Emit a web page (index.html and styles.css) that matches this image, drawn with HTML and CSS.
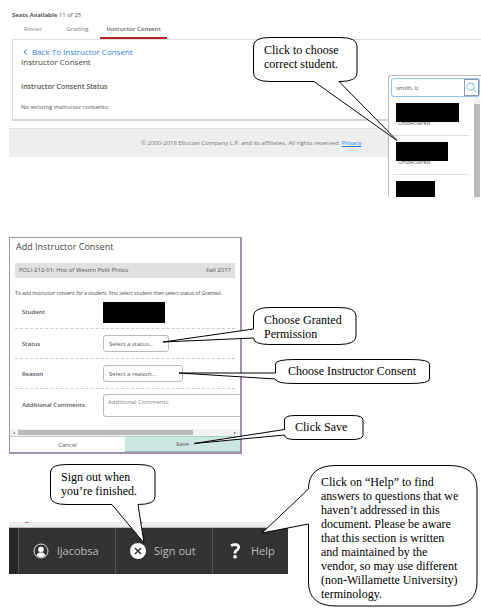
FILE: index.html
```html
<!DOCTYPE html>
<html lang="en">
    <head>
        <meta charset="UTF-8">
        <meta name="viewport" content="width=device-width, initial-scale=1">
        <title>Instructor Consent</title>
        <link rel="stylesheet" href="styles.css">
    </head>
    <body>
        <!-- step 1: find the student -->
        <section class="figure roster">
            <p class="seats"><b>Seats Available</b> 11 of 25</p>
            <nav class="tabs">
                <a href="#roster">Roster</a>
                <a href="#grading">Grading</a>
                <a href="#consent" class="active">Instructor Consent</a>
            </nav>
            <div class="card">
                <a href="#back" class="back"><svg class="chevron" viewBox="0 0 5 6"><path d="M4 0.5 L1 3 L4 5.5"/></svg>Back To Instructor Consent</a>
                <h1>Instructor Consent</h1>
                <h2>Instructor Consent Status</h2>
                <p>No existing instructor consents</p>
            </div>
            <footer class="copyright">© 2000-2018 Ellucian Company L.P. and its affiliates. All rights reserved. <a href="#privacy">Privacy</a></footer>

            <div class="picker">
                <form class="search">
                    <input type="text" value="smith, b" aria-label="Search students">
                    <button type="button" aria-label="Search">
                        <svg viewBox="0 0 12 12"><circle cx="5" cy="5" r="4"/><path d="M8 8 L11 11"/></svg>
                    </button>
                </form>
                <div class="results">
                    <ul>
                        <li><span class="redacted name-1"></span><span class="major">Undeclared</span></li>
                        <li><span class="redacted name-2"></span><span class="major">Undeclared</span></li>
                        <li><span class="redacted name-3"></span></li>
                    </ul>
                    <div class="scroll-y"></div>
                </div>
            </div>

            <div class="callout choose-student">
                <svg><path d="M17 .5 H87 Q104 .5 104 9 V36 Q104 44.500 87 44.500 H86 L144 103.500 L61 44.500 H17 Q.5 44.500 .5 36 V9 Q.5 .5 17 .5 Z"/></svg>
                <p>Click to choose<br>correct student.</p>
            </div>
        </section>

        <!-- step 2: fill in the consent -->
        <section class="figure consent">
            <form class="dialog">
                <h2>Add Instructor Consent</h2>
                <div class="course"><span>POLI-212-01: Hist of Westrn Polit Philos</span><span>Fall 2017</span></div>
                <p class="hint">To add instructor consent for a student, first select student then select status of Granted.</p>
                <div class="row picked">
                    <span class="label">Student</span>
                    <span class="redacted student"></span>
                </div>
                <div class="row">
                    <label for="status">Status</label>
                    <select id="status" class="status"><option>Select a status...</option></select>
                </div>
                <div class="row">
                    <label for="reason">Reason</label>
                    <select id="reason" class="reason"><option>Select a reason...</option></select>
                </div>
                <div class="row comments">
                    <label for="comments">Additional Comments</label>
                    <textarea id="comments" placeholder="Additional Comments"></textarea>
                </div>
                <div class="scroll-x"><span class="arrow-left"></span><span class="thumb"></span><span class="arrow-right"></span></div>
                <div class="actions">
                    <button type="button">Cancel</button>
                    <button type="button" class="save">Save</button>
                </div>
            </form>

            <div class="callout choose-status">
                <svg><path d="M17 .5 H86 Q103 .5 103 9 V29 Q103 37.500 86 37.500 H17 Q.5 37.500 .5 31 L-90 35 L.5 22 V9 Q.5 .5 17 .5 Z"/></svg>
                <p>Choose Granted<br>Permission</p>
            </div>
            <div class="callout choose-reason">
                <svg><path d="M20 .5 H135 Q154.500 .5 154.500 5 V20 Q154.500 24.500 135 24.500 H20 Q.5 24.500 .5 20 L-96 14 H.5 V5 Q.5 .5 20 .5 Z"/></svg>
                <p>Choose Instructor Consent</p>
            </div>
            <div class="callout click-save">
                <svg><path d="M11 .5 H68 Q79 .5 79 5 V20 Q79 24.500 68 24.500 H11 Q.5 24.500 .5 20 L-90 28.500 L.5 14.500 V5 Q.5 .5 11 .5 Z"/></svg>
                <p>Click Save</p>
            </div>
        </section>

        <!-- step 3: leave or get help -->
        <section class="figure account">
            <div class="strip">
                <svg viewBox="0 0 279 5"><path d="M15 0 Q18 1.500 21 0 Z M131 0 H134 L132 1.500 Z"/></svg>
            </div>
            <nav class="toolbar">
                <a href="#user">
                    <svg class="icon" viewBox="0 0 16 16"><circle cx="8" cy="8" r="7" fill="none" stroke="#ddd"/><circle cx="8" cy="6.500" r="2.800" fill="#fff"/><path d="M3.500 12.500 Q4 10 6.500 9.500 H9.500 Q12 10 12.500 12.500 Q8 16 3.500 12.500 Z" fill="#fff"/></svg>
                    <span>ljacobsa</span>
                </a>
                <a href="#signout">
                    <svg class="icon" viewBox="0 0 16 16"><circle cx="8" cy="8" r="8" fill="#fff"/><path d="M5 5 L11 11 M11 5 L5 11" stroke="#333" stroke-width="1.500"/></svg>
                    <span>Sign out</span>
                </a>
                <a href="#help" class="help">
                    <svg class="icon" viewBox="0 0 16 16"><path d="M4 2.500 Q6.500 1.300 9 1.700 Q12 2.500 11.500 5 Q11 6.800 9 7.800 Q8 8.500 8 10.500" fill="none" stroke="#fff" stroke-width="2.800"/><rect x="6.300" y="12" width="3.400" height="3.400" rx="1" fill="#fff"/></svg>
                    <span>Help</span>
                </a>
            </nav>

            <div class="callout sign-out">
                <svg><path d="M17 .5 H88 Q105 .5 105 8 V33 Q105 40.500 88 40.500 L94 79 L62 40.500 H17 Q.5 40.500 .5 33 V8 Q.5 .5 17 .5 Z"/></svg>
                <p>Sign out when<br>you’re finished.</p>
            </div>
            <div class="callout get-help">
                <svg><path d="M28 .5 H141 Q169 .5 169 24 V117 Q169 141 141 141 H28 Q.5 141 .5 117 V59 L-46 68 L.5 24 Q.5 .5 28 .5 Z"/></svg>
                <p>Click on “Help” to find<br>answers to questions that we<br>haven’t addressed in this<br>document. Please be aware<br>that this section is written<br>and maintained by the<br>vendor, so may use different<br>(non-Willamette University)<br>terminology.</p>
            </div>
        </section>
    </body>
</html>
```

FILE: styles.css
```css
* {
    box-sizing: border-box;
}
body {
    margin: 0;
    background: #fff;
    color: #555;
    font-family: "Open Sans", sans-serif;
    font-size: 6px;
    line-height: 8px;
}
h1, h2, p, ul {
    margin: 0;
    padding: 0;
}
input, button, select, textarea {
    margin: 0;
    font: inherit;
    color: inherit;
}
.figure {
    position: relative;
}
.redacted {
    display: block;
    background: #000;
}

/* roster page */
.roster {
    height: 197px;
    padding: 10px 0 0 9px;
    overflow: hidden;
}
.seats {
    padding-left: 3px;
    line-height: 10px;
}
.tabs {
    display: flex;
    margin-left: 3px;
    padding-right: 2px;
    border-bottom: 1px solid #ddd;
}
.tabs a {
    padding: 5px 12px 4px;
    color: #888;
    text-decoration: none;
}
.tabs .active {
    padding: 5px 6px 4px;
    border-bottom: 2px solid #b8201f;
    color: #666;
    font-weight: 600;
}
.card {
    margin: 0 2px 0 3px;
    padding: 7px 8px 8px;
    border-left: 1px solid #ddd;
    border-bottom: 2px solid #d4d4d4;
}
.back {
    display: flex;
    align-items: center;
    gap: 4px;
    padding-left: 2px;
    color: #2f80e0;
    font-size: 8px;
    line-height: 10px;
    text-decoration: none;
}
.chevron {
    width: 5px;
    height: 6px;
    fill: none;
    stroke: #2f80e0;
}
.card h1 {
    color: #444;
    font-size: 8px;
    font-weight: 400;
    line-height: 10px;
}
.card h2 {
    margin: 16px 0 12px;
    font-size: 7px;
    font-weight: 600;
}
.copyright {
    margin-top: 7px;
    padding: 10px 0 10px 132px;
    border-top: 1px solid #e0e0e0;
    background: #eee;
    color: #777;
}
.copyright a {
    color: #2f80e0;
}

/* student picker */
.picker {
    position: absolute;
    top: 75px;
    right: 0;
    width: 93px;
    padding: 2px 1px 0 2px;
    border: 1px solid #bbb;
    border-right: 0;
    border-radius: 3px 0 0 0;
    background: #fff;
}
.search {
    display: flex;
    height: 19px;
    border: 1px solid #8fc4f7;
    border-radius: 3px;
}
.search input {
    flex: 1;
    min-width: 0;
    padding: 0 4px;
    border: 0;
    background: none;
}
.search button {
    display: flex;
    align-items: center;
    justify-content: center;
    width: 15px;
    padding: 0;
    border: 1px solid #8a9bb5;
    background: #fff;
}
.search svg {
    width: 11px;
    height: 11px;
    fill: none;
    stroke: #6cb2f2;
}
.results {
    display: flex;
    justify-content: space-between;
    height: 102px;
}
.results ul {
    width: 78px;
    padding-left: 2px;
    list-style: none;
}
.results li {
    height: 39px;
    padding: 6px 0 0 3px;
    border-bottom: 1px solid #ddd;
}
.results .redacted {
    position: relative;
    height: 19px;
}
.name-1 {
    width: 63px;
}
.name-2 {
    width: 52px;
}
.name-3 {
    width: 39px;
}
.major {
    display: block;
    margin-top: -2px;
    padding-left: 2px;
    line-height: 6px;
}
.scroll-y {
    width: 6px;
    border-top: 7px solid #eee;
    background: #bbb;
}

/* add consent dialog */
.consent {
    margin-top: 40px;
    padding-left: 9px;
}
.dialog {
    width: 233px;
    border: 1px solid #a591ad;
    border-right-width: 2px;
    border-bottom-width: 2px;
    background: #fff;
    overflow: hidden;
}
.dialog h2 {
    padding: 3px 6px 10px;
    color: #444;
    font-size: 9px;
    font-weight: 400;
    line-height: 12px;
}
.course {
    display: flex;
    justify-content: space-between;
    margin: 0 5px;
    padding: 3px 4px 4px;
    background: #e0e0e0;
}
.hint {
    padding: 11px 0 2px 5px;
    color: #444;
    font-size: 5px;
    white-space: nowrap;
}
.row {
    display: grid;
    grid-template-columns: 88px 1fr;
    align-items: center;
    height: 30px;
    margin: 0 5px;
    border-bottom: 1px dashed #ccc;
}
.row label, .label {
    padding-left: 7px;
    font-weight: 600;
}
.picked {
    padding-bottom: 3px;
}
.student {
    width: 62px;
    height: 21px;
}
.row select, .row textarea {
    border: 1px solid #bbb;
    border-radius: 3px;
    background: #fff;
}
.row select {
    height: 17px;
    padding: 0 5px;
    appearance: none;
}
.status {
    width: 66px;
}
.reason {
    width: 80px;
}
.comments {
    height: 40px;
    padding-bottom: 8px;
    border: 0;
}
.row textarea {
    width: 150px;
    height: 23px;
    padding: 3px 4px;
    resize: none;
}
.row textarea::placeholder {
    color: #888;
}
.scroll-x {
    display: flex;
    align-items: center;
    gap: 3px;
    height: 7px;
    padding: 0 2px;
    background: #f1f1f1;
}
.scroll-x .thumb {
    width: 175px;
    height: 5px;
    background: #bbb;
}
.arrow-left, .arrow-right {
    border: 1px solid transparent;
    border-right: 2px solid #777;
}
.arrow-right {
    margin-left: auto;
    border-right-color: transparent;
    border-left: 2px solid #444;
}
.actions {
    display: grid;
    grid-template-columns: 1fr 1fr;
    height: 16px;
}
.actions button {
    padding: 0;
    border: 0;
    border-top: 1px solid #ccc;
    background: #fff;
}
.actions .save {
    border-top-color: #a9cfc9;
    border-bottom: 1px solid #8fc0bc;
    background: #cde5e0;
}

/* account toolbar */
.account {
    margin-top: 68px;
    padding: 0 0 39px 9px;
}
.strip {
    width: 279px;
    height: 6px;
    border-bottom: 1px solid #bbb;
    background: #eee;
}
.strip svg {
    display: block;
    height: 5px;
    fill: #b8201f;
}
.toolbar {
    display: flex;
    width: 279px;
    height: 46px;
    border-left: 9px solid #262626;
    background: #333;
}
.toolbar a {
    display: flex;
    align-items: center;
    gap: 8px;
    width: 97px;
    padding-left: 14px;
    border-left: 1px solid #555;
    color: #bbb;
    font-size: 11px;
    line-height: 14px;
    text-decoration: none;
}
.toolbar .help {
    width: 76px;
}
.icon {
    width: 16px;
    height: 16px;
}

/* speech balloons over the screens */
.callout {
    position: absolute;
    z-index: 1;
    padding: 6px 11px;
    color: #000;
    font-family: "Liberation Serif", serif;
    font-size: 12px;
    line-height: 14px;
    white-space: nowrap;
}
.callout svg {
    position: absolute;
    top: 0;
    left: 0;
    width: 100%;
    height: 100%;
    overflow: visible;
    fill: #fff;
    stroke: #000;
}
.callout p {
    position: relative;
}
.choose-student {
    top: 37px;
    left: 253px;
}
.choose-status {
    top: 70px;
    left: 253px;
}
.choose-reason {
    top: 122px;
    left: 275px;
    padding: 5px 13px;
}
.click-save {
    top: 178px;
    left: 284px;
    padding: 5px 11px;
}
.sign-out {
    top: -58px;
    left: 50px;
}
.get-help {
    top: -57px;
    left: 308px;
    padding: 10px 13px;
}
```
